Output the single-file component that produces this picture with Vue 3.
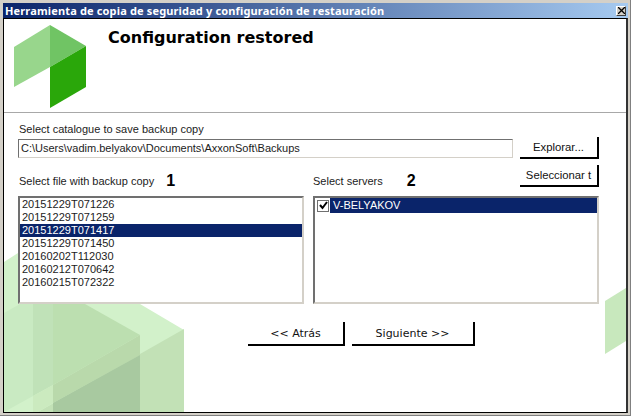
<script setup>
const files = [
  '20151229T071226',
  '20151229T071259',
  '20151229T071417',
  '20151229T071450',
  '20160202T112030',
  '20160212T070642',
  '20160215T072322',
]
const selected = '20151229T071417'
</script>

<template>
  <div class="window">
    <div class="titlebar">
      <span class="title">Herramienta de copia de seguridad y configuración de restauración</span>
      <span class="close">
        <svg width="7" height="7" viewBox="0 0 7 7"><path d="M0 0 L7 7 M7 0 L0 7" stroke="#000" stroke-width="1.3" fill="none" /></svg>
      </span>
    </div>
    <div class="client">
      <svg class="backdrop" width="622" height="393" viewBox="4 19 622 393">
        <polygon points="4,262 18,253 18,304 140,304 184,330 184,412 4,412" fill="#d2f1ca" />
        <polygon points="38,412 184,329 184,412" fill="#c2e1b6" />
        <polygon points="4,313 20,304 33,304 33,396 4,412" fill="#c9eac2" />
        <polygon points="33,304 53,304 53,385 33,396" fill="#c0e2b8" />
        <polygon points="53,304 85,304 140,335 53,385" fill="#bcdfb0" />
        <polygon points="53,385 140,335 140,355 53,403" fill="#b9d9ab" />
        <polygon points="33,396 53,385 53,403 38,412 33,412" fill="#cbeabf" />
        <polygon points="53,403 140,355 140,412 53,412" fill="#a8c9a0" />
        <polygon points="605,301 626,288 626,341 605,354" fill="#c8e8bd" />
      </svg>
      <header class="head">
        <svg class="logo" width="72" height="83" viewBox="0 0 72 83">
          <polygon points="0,22 36,0 36,42 0,62" fill="#98d68c" />
          <polygon points="36,0 72,21 36,42" fill="#70c464" />
          <polygon points="36,42 72,21 72,62 36,83" fill="#2aa70a" />
        </svg>
        <h1 class="heading">Configuration restored</h1>
      </header>
      <main class="form">
        <div class="label catalog-label">Select catalogue to save backup copy</div>
        <div class="path-row">
          <div class="path">C:\Users\vadim.belyakov\Documents\AxxonSoft\Backups</div>
          <button class="btn side">Explorar...</button>
        </div>
        <div class="columns">
          <section class="col">
            <div class="col-head">
              <span class="label indent">Select file with backup copy</span>
              <b class="num first">1</b>
            </div>
            <div class="list">
              <div v-for="f in files" :key="f" class="row" :class="{ on: f === selected }">{{ f }}</div>
            </div>
          </section>
          <section class="col">
            <div class="col-head">
              <span class="label">Select servers</span>
              <b class="num second">2</b>
              <button class="btn side select-all">Seleccionar t</button>
            </div>
            <div class="list">
              <div class="server">
                <span class="check">
                  <svg width="9" height="9" viewBox="0 0 9 9"><path d="M1 4 L3.5 7 L8 1" stroke="#000" stroke-width="2" fill="none" /></svg>
                </span>
                <span class="server-name">V-BELYAKOV</span>
              </div>
            </div>
          </section>
        </div>
        <div class="nav">
          <button class="btn nav-btn back">&lt;&lt; Atrás</button>
          <button class="btn nav-btn next">Siguiente &gt;&gt;</button>
        </div>
      </main>
    </div>
  </div>
</template>

<style>
html, body { margin: 0; background: #d4d0c8; }
</style>

<style scoped>
.window {
  width: 631px;
  height: 416px;
  box-sizing: border-box;
  padding: 3px;
  background: #d4d0c8;
  box-shadow: inset -1px -1px 0 #808080;
  display: flex;
  flex-direction: column;
  font-family: "Liberation Sans", Arial, sans-serif;
  overflow: hidden;
}
.titlebar {
  height: 15px;
  flex: none;
  display: flex;
  align-items: center;
  justify-content: space-between;
  padding: 0 2px;
  background: linear-gradient(90deg, #0a246a, #a6caf0);
}
.title {
  color: #fff;
  font: bold 11px "Noto Sans", sans-serif;
  letter-spacing: 0.15px;
  white-space: nowrap;
}
.close {
  width: 10px;
  height: 10px;
  box-sizing: border-box;
  display: flex;
  align-items: center;
  justify-content: center;
  background: #d4d0c8;
  border: 1px solid;
  border-color: #fff #404040 #404040 #fff;
}
.close svg { flex: none; }
.client {
  position: relative;
  flex: 1;
  background: #fff;
  border: 1px solid #000;
  border-right: 2px solid #333;
  overflow: hidden;
}
.backdrop {
  position: absolute;
  left: 0;
  top: 0;
}
.head {
  position: relative;
  height: 94px;
  box-sizing: border-box;
  border-bottom: 1px solid #a8a8a8;
  display: flex;
  background: #fff;
}
.logo {
  margin: 6px 0 0 10px;
  flex: none;
}
.heading {
  margin: 9px 0 0 22px;
  font: bold 16px "DejaVu Sans", sans-serif;
  color: #000;
  line-height: 20px;
}
.form {
  position: relative;
  padding: 9px 27px 0 14px;
}
.label {
  font-size: 11px;
  line-height: 14px;
  color: #1c1c1c;
}
.catalog-label { margin-left: 1px; }
.path-row {
  display: flex;
  align-items: flex-start;
  justify-content: space-between;
  margin-top: 1px;
}
.path {
  width: 495px;
  height: 19px;
  margin-top: 2px;
  box-sizing: border-box;
  border: 1px solid;
  border-color: #707070 #d4d0c8 #d4d0c8 #707070;
  background: #fff;
  font-size: 11px;
  line-height: 17px;
  padding-left: 2px;
  color: #1c1c1c;
  white-space: nowrap;
}
.btn {
  background: #fff;
  border: 0;
  border-right: 2px solid #000;
  border-bottom: 2px solid #000;
  padding: 0;
  color: #111;
}
.side {
  width: 79px;
  height: 22px;
  flex: none;
  font: 11.3px "Liberation Sans", sans-serif;
}
.columns {
  display: grid;
  grid-template-columns: 286px 286px;
  gap: 9px;
  margin-top: 6px;
}
.col-head {
  height: 31px;
  display: flex;
  align-items: center;
}
.col-head .label { margin-top: 1px; }
.col-head .indent { margin-left: 1px; }
.num {
  font-size: 16px;
  color: #000;
}
.first { margin-left: 12px; }
.second { margin-left: 24px; }
.select-all { margin-left: auto; align-self: flex-start; }
.list {
  height: 108px;
  box-sizing: border-box;
  border: 2px solid;
  border-color: #707070 #d4d0c8 #d4d0c8 #707070;
  background: #fff;
}
.row {
  font-size: 11px;
  line-height: 13px;
  height: 13px;
  padding-left: 2px;
  color: #1c1c1c;
}
.row.on {
  background: #0a246a;
  color: #fff;
}
.server {
  display: flex;
  align-items: center;
  height: 15px;
  padding-left: 2px;
}
.check {
  width: 12px;
  height: 12px;
  box-sizing: border-box;
  flex: none;
  border: 1px solid #707070;
  display: flex;
  align-items: center;
  justify-content: center;
  background: #fff;
}
.server-name {
  flex: 1;
  margin-left: 1px;
  background: #0a246a;
  color: #fff;
  font-size: 11px;
  line-height: 15px;
  padding-left: 3px;
}
.nav {
  display: flex;
  gap: 7px;
  margin: 18px 0 0 230px;
}
.nav-btn {
  height: 24px;
  font: 11px "DejaVu Sans", sans-serif;
}
.back { width: 97px; }
.next { width: 123px; }
</style>
